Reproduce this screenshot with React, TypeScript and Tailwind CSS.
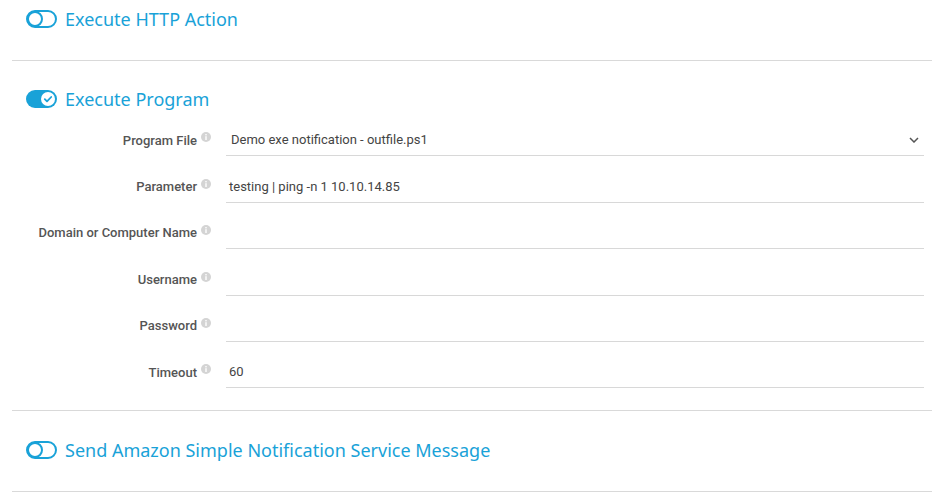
import React from "react";

const BLUE = "#19a2d8";

function ToggleOff() {
  return (
    <svg width="31" height="18" viewBox="0 0 31 18" fill="none">
      <rect x="1" y="1" width="29" height="16" rx="8" stroke={BLUE} strokeWidth="2" />
      <circle cx="9" cy="9" r="7" stroke={BLUE} strokeWidth="2" />
    </svg>
  );
}

function ToggleOn() {
  return (
    <svg width="31" height="18" viewBox="0 0 31 18" fill="none">
      <rect x="0" y="0" width="31" height="18" rx="9" fill={BLUE} />
      <circle cx="22" cy="9" r="7" fill="#fff" />
      <path d="M18.8 9.2 L21 11.4 L25.2 7" stroke={BLUE} strokeWidth="1.8" strokeLinecap="round" strokeLinejoin="round" fill="none" />
    </svg>
  );
}

function Info() {
  return (
    <svg width="10" height="10" viewBox="0 0 10 10" className="ml-[4px] -mt-[6px] shrink-0">
      <circle cx="5" cy="5" r="5" fill="#d4d4d4" />
      <rect x="4.3" y="4.2" width="1.4" height="3.8" fill="#fff" />
      <rect x="4.3" y="2" width="1.4" height="1.4" fill="#fff" />
    </svg>
  );
}

function Heading({ on, title }: { on?: boolean; title: string }) {
  return (
    <div className="flex h-6 items-center pl-[14px]">
      {on ? <ToggleOn /> : <ToggleOff />}
      <span
        className="ml-[8px] text-[18px] leading-6"
        style={{ color: BLUE, fontFamily: '"Noto Sans", "Open Sans", sans-serif' }}
      >
        {title}
      </span>
    </div>
  );
}

function Row({ label, value, select, pl = "pl-[3px]" }: { label: string; value?: string; select?: boolean; pl?: string }) {
  return (
    <div className="flex h-[46.4px] items-end">
      <div className="flex h-[32px] w-[199px] shrink-0 items-center justify-end">
        <span className="text-[13px] font-medium text-[#555]">{label}</span>
        <Info />
      </div>
      <div className="ml-[15px] mr-[8px] flex h-[32px] flex-1 items-center border-b border-[#d8d8d8]">
        <span className={`flex-1 text-[13px] text-[#444] ${pl}`}>{value}</span>
        {select && (
          <svg width="10" height="6" viewBox="0 0 10 6" className="mr-[5px]">
            <path d="M1 1 L5 5 L9 1" stroke="#555" strokeWidth="1.5" fill="none" />
          </svg>
        )}
      </div>
    </div>
  );
}

export default function App() {
  return (
    <div className="h-[496px] w-[932px] overflow-hidden bg-white pl-3" style={{ fontFamily: "Roboto, sans-serif" }}>
      <div className="border-b border-[#d9d9d9] pt-[7px] pb-[29px]">
        <Heading title="Execute HTTP Action" />
      </div>
      <div className="border-b border-[#d9d9d9] pt-[26px] pb-[22px]">
        <Heading on title="Execute Program" />
        <div className="-mt-[1px]">
          <Row label="Program File" value="Demo exe notification - outfile.ps1" select pl="pl-[5px]" />
          <Row label="Parameter" value="testing | ping -n 1 10.10.14.85" />
          <Row label="Domain or Computer Name" />
          <Row label="Username" />
          <Row label="Password" />
          <Row label="Timeout" value="60" />
        </div>
      </div>
      <div className="border-b border-[#d9d9d9] pt-[27px] pb-[29px]">
        <Heading title="Send Amazon Simple Notification Service Message" />
      </div>
    </div>
  );
}
